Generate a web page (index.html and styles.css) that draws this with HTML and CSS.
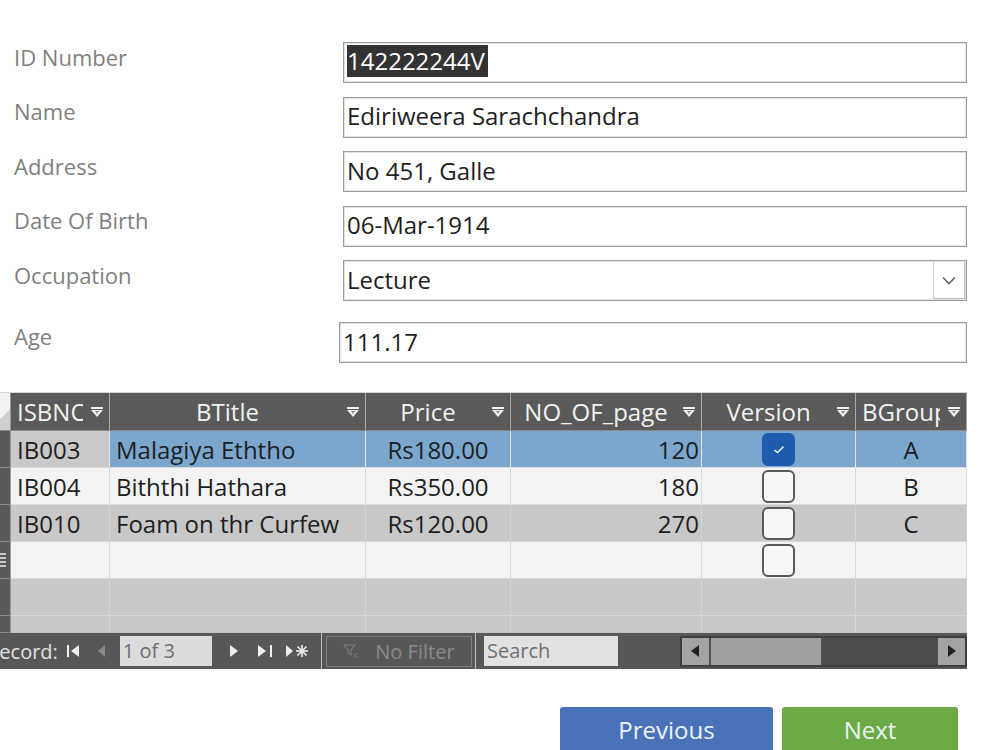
FILE: index.html
```html
<!DOCTYPE html>
<html lang="en">
<head>
    <meta charset="UTF-8">
    <meta name="viewport" content="width=device-width, initial-scale=1.0">
    <title>Member Form</title>
    <link rel="stylesheet" href="styles.css">
</head>
<body>
    <div class="member-form">
        <div class="form-row">
            <div class="label">ID Number</div>
            <div class="field"><span class="selected">142222244V</span></div>
        </div>
        <div class="form-row">
            <div class="label">Name</div>
            <div class="field">Ediriweera Sarachchandra</div>
        </div>
        <div class="form-row">
            <div class="label">Address</div>
            <div class="field">No 451, Galle</div>
        </div>
        <div class="form-row">
            <div class="label">Date Of Birth</div>
            <div class="field">06-Mar-1914</div>
        </div>
        <div class="form-row">
            <div class="label">Occupation</div>
            <div class="field combo">
                <span class="combo-value">Lecture</span>
                <span class="combo-drop">
                    <svg width="14" height="9" viewBox="0 0 14 9"><polyline points="1,1.5 7,7.5 13,1.5" fill="none" stroke="#666" stroke-width="1.6"/></svg>
                </span>
            </div>
        </div>
        <div class="form-row age-row">
            <div class="label">Age</div>
            <div class="field">111.17</div>
        </div>
    </div>

    <div class="datasheet">
        <div class="sheet-row sheet-head">
            <div class="selector corner"></div>
            <div class="hcell"><span class="htext left">ISBNO</span><span class="harrow"></span></div>
            <div class="hcell"><span class="htext">BTitle</span><span class="harrow"></span></div>
            <div class="hcell"><span class="htext">Price</span><span class="harrow"></span></div>
            <div class="hcell"><span class="htext">NO_OF_page</span><span class="harrow"></span></div>
            <div class="hcell"><span class="htext">Version</span><span class="harrow"></span></div>
            <div class="hcell"><span class="htext left">BGroup</span><span class="harrow"></span></div>
        </div>

        <div class="sheet-row active">
            <div class="selector"></div>
            <div class="cell current">IB003</div>
            <div class="cell">Malagiya Eththo</div>
            <div class="cell center">Rs180.00</div>
            <div class="cell right">120</div>
            <div class="cell center"><span class="check checked">
                <svg width="14" height="11" viewBox="0 0 14 11"><polyline points="2.5,6 5.5,8.5 11.5,2.5" fill="none" stroke="#fff" stroke-width="1.3"/></svg>
            </span></div>
            <div class="cell center">A</div>
        </div>
        <div class="sheet-row light">
            <div class="selector"></div>
            <div class="cell">IB004</div>
            <div class="cell">Biththi Hathara</div>
            <div class="cell center">Rs350.00</div>
            <div class="cell right">180</div>
            <div class="cell center"><span class="check"></span></div>
            <div class="cell center">B</div>
        </div>
        <div class="sheet-row dark">
            <div class="selector"></div>
            <div class="cell">IB010</div>
            <div class="cell">Foam on thr Curfew</div>
            <div class="cell center">Rs120.00</div>
            <div class="cell right">270</div>
            <div class="cell center"><span class="check"></span></div>
            <div class="cell center">C</div>
        </div>
        <div class="sheet-row light">
            <div class="selector new-mark"><span class="new-icon"></span></div>
            <div class="cell"></div>
            <div class="cell"></div>
            <div class="cell"></div>
            <div class="cell"></div>
            <div class="cell center"><span class="check"></span></div>
            <div class="cell"></div>
        </div>
        <div class="sheet-row dark empty">
            <div class="selector"></div>
            <div class="cell"></div><div class="cell"></div><div class="cell"></div>
            <div class="cell"></div><div class="cell"></div><div class="cell"></div>
        </div>
        <div class="sheet-row dark empty short">
            <div class="selector"></div>
            <div class="cell"></div><div class="cell"></div><div class="cell"></div>
            <div class="cell"></div><div class="cell"></div><div class="cell"></div>
        </div>

        <div class="navbar">
            <div class="nav-record">
                <span class="nav-label">Record:</span>
                <svg class="nav-first" width="12" height="14" viewBox="0 0 12 14"><rect x="0" y="1" width="2" height="12" fill="#eee"/><polygon points="12,1 4,7 12,13" fill="#eee"/></svg>
                <svg class="nav-prev" width="9" height="14" viewBox="0 0 9 14"><polygon points="8,1 1,7 8,13" fill="#888"/></svg>
                <span class="nav-box">1 of 3</span>
                <svg class="nav-next" width="10" height="14" viewBox="0 0 10 14"><polygon points="1,1 9,7 1,13" fill="#eee"/></svg>
                <svg class="nav-last" width="16" height="14" viewBox="0 0 16 14"><polygon points="1,1 9,7 1,13" fill="#eee"/><rect x="13" y="1" width="2" height="12" fill="#eee"/></svg>
                <svg class="nav-new" width="26" height="14" viewBox="0 0 26 14">
                    <polygon points="1,1 8,7 1,13" fill="#eee"/>
                    <g stroke="#eee" stroke-width="1.6">
                        <line x1="17" y1="1" x2="17" y2="13"/>
                        <line x1="11" y1="7" x2="23" y2="7"/>
                        <line x1="12.5" y1="2.5" x2="21.5" y2="11.5"/>
                        <line x1="21.5" y1="2.5" x2="12.5" y2="11.5"/>
                    </g>
                </svg>
            </div>
            <div class="nav-filter">
                <svg width="16" height="16" viewBox="0 0 16 16"><polygon points="1,2 12,2 8,7 8,12 5,10 5,7" fill="none" stroke="#7a7a7a" stroke-width="1.2"/><line x1="10" y1="10" x2="15" y2="15" stroke="#7a7a7a"/><line x1="15" y1="10" x2="10" y2="15" stroke="#7a7a7a"/></svg>
                <span>No Filter</span>
            </div>
            <div class="nav-search">
                <span class="search-box">Search</span>
            </div>
            <div class="hscroll">
                <span class="scroll-btn">
                    <svg width="10" height="14" viewBox="0 0 10 14"><polygon points="9,1 1,7 9,13" fill="#222"/></svg>
                </span>
                <span class="scroll-thumb"></span>
                <span class="scroll-track"></span>
                <span class="scroll-btn">
                    <svg width="10" height="14" viewBox="0 0 10 14"><polygon points="1,1 9,7 1,13" fill="#222"/></svg>
                </span>
            </div>
        </div>
    </div>

    <div class="form-buttons">
        <button class="btn btn-prev">Previous</button>
        <button class="btn btn-next">Next</button>
    </div>
</body>
</html>
```

FILE: styles.css
```css
body {
    margin: 0;
    font-family: "Open Sans", "Noto Sans", sans-serif;
    background-color: #ffffff;
    color: #1e1e1e;
    overflow: hidden;
}

/* top form */
.member-form {
    display: flex;
    flex-direction: column;
    gap: 13.5px;
    padding: 42px 33px 0 14px;
}
.form-row {
    display: grid;
    grid-template-columns: 329px 1fr;
    align-items: center;
    height: 41px;
}
.label {
    font-size: 22px;
    color: #7f7f7f;
    margin-top: -12px;
}
.field {
    height: 41px;
    box-sizing: border-box;
    border: 1px solid #9c9c9c;
    box-shadow: inset 0 0 0 1px #e2e2e2;
    padding: 0 0 3px 3px;
    display: flex;
    align-items: center;
    font-size: 24px;
    color: #1e1e1e;
    white-space: nowrap;
}
.selected {
    background-color: #333333;
    color: #ffffff;
    line-height: 32px;
    padding-right: 3px;
}
.combo {
    padding-right: 0;
    padding-bottom: 0;
}
.combo-value {
    flex: 1;
    padding-bottom: 3px;
}
.combo-drop {
    width: 32px;
    height: 37px;
    box-sizing: border-box;
    border-left: 1px solid #cfcfcf;
    border-right: 1px solid #bdbdbd;
    border-bottom: 1px solid #bdbdbd;
    display: flex;
    align-items: center;
    justify-content: center;
    margin-right: 1px;
}
.age-row {
    margin-top: 7.5px;
    grid-template-columns: 325px 1fr;
}
.age-row .label {
    margin-top: -13px;
}

/* datasheet */
.datasheet {
    width: 967px;
    margin-top: 29px;
    overflow: hidden;
}
.sheet-row {
    display: grid;
    grid-template-columns: 11px 99px 256px 145px 191px 154px 111px;
    height: 37px;
    box-sizing: border-box;
    border-bottom: 1px solid #dcdcdc;
}
.sheet-head {
    height: 39px;
    background-color: #5a5a5a;
    border-top: 1px solid #d6d6d6;
    border-bottom: 1px solid #8a8a8a;
}
.selector {
    background-color: #595959;
    border-right: 1px solid #9a9a9a;
    border-bottom: 1px solid #8a8a8a;
    margin-bottom: -1px;
}
.selector.corner {
    background: linear-gradient(135deg, #f2f2f2 55%, #d0d0d0 56%);
    border-bottom: none;
    margin-bottom: 0;
}
.new-mark {
    display: flex;
    align-items: center;
    overflow: hidden;
}
.new-icon {
    width: 8px;
    height: 14px;
    margin-left: -2px;
    background: repeating-linear-gradient(#c8c8c8 0 2px, #595959 2px 4px);
}
.hcell {
    display: flex;
    align-items: center;
    border-right: 1px solid #a9a9a9;
    padding: 0 6px 0 6px;
    color: #f2f2f2;
    font-size: 24px;
    overflow: hidden;
    white-space: nowrap;
}
.htext {
    flex: 1;
    min-width: 0;
    overflow: hidden;
    text-align: center;
}
.htext.left {
    text-align: left;
}
.harrow {
    flex: none;
    width: 0;
    height: 0;
    margin-left: 8px;
    border-left: 6px solid transparent;
    border-right: 6px solid transparent;
    border-top: 7px solid #f0f0f0;
    position: relative;
    top: 2px;
}
.harrow::before {
    content: "";
    position: absolute;
    left: -6px;
    top: -10px;
    width: 12px;
    height: 2px;
    background-color: #f0f0f0;
}
.harrow::after {
    content: "";
    position: absolute;
    left: -2px;
    top: -6px;
    border-left: 2px solid transparent;
    border-right: 2px solid transparent;
    border-top: 3px solid #8c8c8c;
}
.cell {
    display: flex;
    align-items: center;
    padding: 0 6px;
    border-right: 1px solid #d9d9d9;
    font-size: 24px;
    color: #1e1e1e;
    white-space: nowrap;
    overflow: hidden;
}
.cell.center {
    justify-content: center;
}
.cell.right {
    justify-content: flex-end;
    padding-right: 2px;
}
.light {
    background-color: #f3f3f3;
}
.dark {
    background-color: #c8c8c8;
    border-bottom-color: #d8d8d8;
}
.dark .cell {
    border-right-color: #d4d4d4;
}
.active {
    background-color: #7ba7cf;
    border-bottom-color: #dcdcdc;
}
.active .cell {
    border-right-color: #e4e4e4;
}
.active .cell.current {
    background-color: #c9c9c9;
}
.short {
    height: 16px;
    border-bottom: none;
}
.check {
    width: 33px;
    height: 33px;
    box-sizing: border-box;
    border: 2px solid #5a5a5a;
    border-radius: 6px;
    background-color: #f7f7f7;
    display: flex;
    align-items: center;
    justify-content: center;
}
.check.checked {
    background-color: #1f5caf;
    border-color: #1f5caf;
}

/* record navigation bar */
.navbar {
    display: flex;
    align-items: center;
    height: 37px;
    box-sizing: border-box;
    background-color: #575757;
    border-top: 1px solid #c4c4c4;
    color: #e6e6e6;
    font-size: 20px;
}
.nav-record {
    display: flex;
    align-items: center;
    width: 322px;
    height: 100%;
    border-right: 1px solid #c0c0c0;
    overflow: hidden;
}
.nav-label {
    margin-left: -13px;
    color: #e2e2e2;
}
.nav-first {
    margin-left: 9px;
}
.nav-prev {
    margin-left: 18px;
}
.nav-box {
    margin-left: 14px;
    width: 92px;
    height: 30px;
    line-height: 30px;
    padding-left: 3px;
    box-sizing: border-box;
    background-color: #dcdcdc;
    color: #6e6e6e;
}
.nav-next {
    margin-left: 17px;
}
.nav-last {
    margin-left: 18px;
}
.nav-new {
    margin-left: 12px;
}
.nav-filter {
    display: flex;
    align-items: center;
    gap: 16px;
    margin-left: 4px;
    width: 146px;
    height: 31px;
    box-sizing: border-box;
    border: 1px solid #7e7e7e;
    padding-left: 16px;
    color: #8a8a8a;
}
.nav-search {
    display: flex;
    align-items: center;
    margin-left: 3px;
    border-left: 1px solid #c0c0c0;
    height: 100%;
    width: 202px;
    padding-left: 8px;
    box-sizing: border-box;
}
.search-box {
    width: 134px;
    height: 30px;
    line-height: 30px;
    padding-left: 3px;
    box-sizing: border-box;
    background-color: #e2e2e2;
    color: #707070;
}
.hscroll {
    display: flex;
    align-items: stretch;
    gap: 2px;
    width: 288px;
    height: 31px;
    box-sizing: border-box;
    margin-left: 3px;
    border: 2px solid #3e3e3e;
    background-color: #4f4f4f;
}
.scroll-btn {
    width: 27px;
    background-color: #a3a3a3;
    display: flex;
    align-items: center;
    justify-content: center;
}
.scroll-thumb {
    width: 110px;
    background-color: #a0a0a0;
}
.scroll-track {
    flex: 1;
}

/* bottom buttons */
.form-buttons {
    display: flex;
    justify-content: flex-end;
    gap: 9px;
    margin-top: 38px;
    padding-right: 42px;
}
.btn {
    height: 50px;
    border: none;
    border-radius: 3px 3px 0 0;
    font-family: "Open Sans", "Noto Sans", sans-serif;
    font-size: 24px;
    color: #eef2f8;
    padding: 0 0 6px;
    cursor: pointer;
}
.btn-prev {
    width: 213px;
    background-color: #4a72b9;
}
.btn-next {
    width: 176px;
    background-color: #6aab46;
}
```
